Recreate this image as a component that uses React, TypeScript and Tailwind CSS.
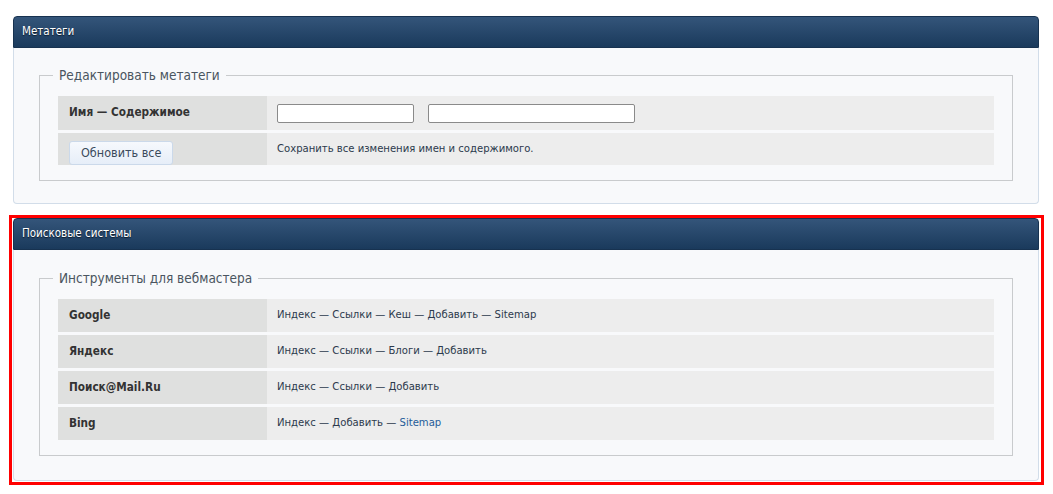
const font = { fontFamily: '"DejaVu Sans Condensed", "Liberation Sans", sans-serif' };

function PanelHeader({ title }: { title: string }) {
  return (
    <div className="flex h-[32px] items-center rounded-t-[4px] border border-[#173250] bg-gradient-to-b from-[#34557a] to-[#1a3a5c] px-[8px] text-[11.5px] text-white [text-shadow:0_1px_1px_#0b1a2b]">
      {title}
    </div>
  );
}

function Fieldset({ legend, children }: { legend: string; children: React.ReactNode }) {
  return (
    <fieldset className="m-0 border border-[#c9cbcd] px-[18px] pb-[15px] pt-[11px]">
      <legend className="-ml-[5px] px-[6px] text-[13.5px] leading-[20px] text-[#4a5560]">{legend}</legend>
      <div className="flex flex-col gap-[3px]">{children}</div>
    </fieldset>
  );
}

function Row({ label, children, h = "h-[33px]" }: { label: React.ReactNode; children: React.ReactNode; h?: string }) {
  return (
    <div className={`flex ${h}`}>
      <div className="flex w-[209px] shrink-0 items-center bg-[#dfe0df] px-[11px] text-[11.7px] font-bold text-[#333]">
        {label}
      </div>
      <div className="flex flex-1 items-center bg-[#ededed] px-[10px] text-[11.2px] text-[#2c3a4c]">{children}</div>
    </div>
  );
}

const engines: { name: string; links: string[]; blue?: boolean }[] = [
  { name: "Google", links: ["Индекс", "Ссылки", "Кеш", "Добавить", "Sitemap"] },
  { name: "Яндекс", links: ["Индекс", "Ссылки", "Блоги", "Добавить"] },
  { name: "Поиск@Mail.Ru", links: ["Индекс", "Ссылки", "Добавить"] },
  { name: "Bing", links: ["Индекс", "Добавить", "Sitemap"], blue: true },
];

export default function App() {
  return (
    <div className="min-h-[494px] bg-white pl-[13px] pr-[14px] pt-[16px]" style={font}>
      <section>
        <PanelHeader title="Метатеги" />
        <div className="rounded-b-[4px] border border-t-0 border-[#d2dde9] bg-[#f8f9fb] px-[25px] pb-[22px] pt-[17px]">
          <Fieldset legend="Редактировать метатеги">
            <Row label="Имя — Содержимое" h="h-[34px]">
              <input className="h-[19px] w-[137px] rounded-[2px] border border-[#8a8a8a] bg-white" />
              <input className="ml-[14px] h-[19px] w-[207px] rounded-[2px] border border-[#8a8a8a] bg-white" />
            </Row>
            <div className="flex h-[32px]">
              <div className="flex w-[209px] shrink-0 items-end bg-[#dfe0df] pl-[11px]">
                <button className="h-[24px] rounded-[3px] border border-[#cbd9ea] bg-gradient-to-b from-[#f6f9fd] to-[#e6eef8] px-[11px] text-[12.5px] text-[#3a4a5c]">
                  Обновить все
                </button>
              </div>
              <div className="flex flex-1 items-center bg-[#ededed] px-[10px] text-[11.2px] text-[#2c3a4c]">
                Сохранить все изменения имен и содержимого.
              </div>
            </div>
          </Fieldset>
        </div>
      </section>

      <div className="-ml-[4px] -mr-[5px] mt-[11px] border-[3px] border-[#ff0000] px-px pb-px pr-[2px]">
        <section>
          <PanelHeader title="Поисковые системы" />
          <div className="rounded-b-[4px] border border-t-0 border-[#d2dde9] bg-[#f8f9fb] px-[25px] pb-[24px] pt-[18px]">
            <Fieldset legend="Инструменты для вебмастера">
              {engines.map((e) => (
                <Row key={e.name} label={e.name}>
                  <span>
                    {e.links.map((l, i) => (
                      <span key={l}>
                        {i > 0 && " — "}
                        <a href="#" className={e.blue && l === "Sitemap" ? "text-[#1f5c99]" : "text-[#2c3a4c]"}>
                          {l}
                        </a>
                      </span>
                    ))}
                  </span>
                </Row>
              ))}
            </Fieldset>
          </div>
        </section>
      </div>
    </div>
  );
}
